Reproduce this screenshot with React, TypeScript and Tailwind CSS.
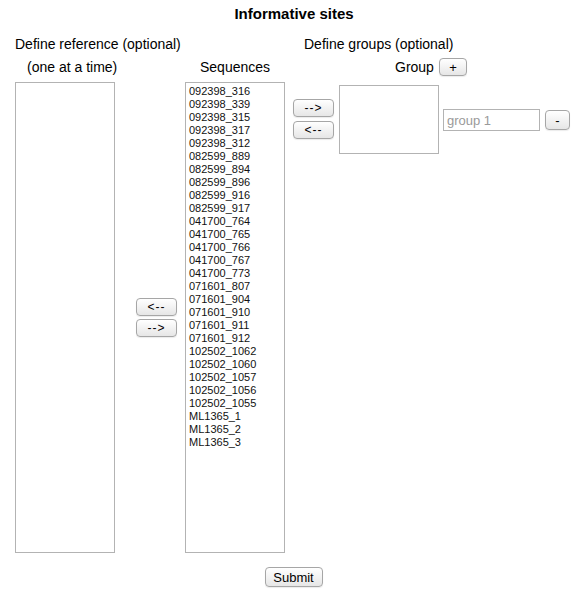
import React from "react";

const sequences = [
  "092398_316", "092398_339", "092398_315", "092398_317", "092398_312",
  "082599_889", "082599_894", "082599_896", "082599_916", "082599_917",
  "041700_764", "041700_765", "041700_766", "041700_767", "041700_773",
  "071601_807", "071601_904", "071601_910", "071601_911", "071601_912",
  "102502_1062", "102502_1060", "102502_1057", "102502_1056", "102502_1055",
  "ML1365_1", "ML1365_2", "ML1365_3",
];

const Btn: React.FC<{ label: string; className?: string }> = ({ label, className = "" }) => (
  <button
    className={`flex items-center justify-center rounded-[4px] border border-[#a6a6a6] bg-gradient-to-b from-white to-[#e6e6e6] text-[12px] leading-none text-black shadow-[0_1px_1px_rgba(0,0,0,0.08)] ${className}`}
  >
    {label}
  </button>
);

const App: React.FC = () => {
  return (
    <div className="w-[582px] h-[596px] bg-white text-black font-['Liberation_Sans',Arial,sans-serif]">
      <h1 className="pt-[5px] h-[36px] text-center text-[15px] leading-[18px] font-bold pl-[6px]">
        Informative sites
      </h1>

      {/* labels row */}
      <div className="flex h-[16px] text-[14px] leading-[16px]">
        <div className="w-[304px] pl-[15px]">Define reference (optional)</div>
        <div>Define groups (optional)</div>
      </div>

      <div className="flex items-center h-[30px] text-[14px]">
        <div className="w-[185px] pl-[27px]">(one at a time)</div>
        <div className="w-[210px] pl-[15px]">Sequences</div>
        <div className="flex items-center">
          <span className="mr-[5px]">Group</span>
          <Btn label="+" className="w-[28px] h-[18px] text-[13px]" />
        </div>
      </div>

      {/* main row */}
      <div className="flex h-[471px]">
        <div className="ml-[15px] w-[100px] h-full border border-[#b3b3b3]" />
        <div className="ml-[21px] w-[41px] flex flex-col justify-center gap-[3px]">
          <Btn label="<--" className="w-[41px] h-[18px] tracking-[1px]" />
          <Btn label="-->" className="w-[41px] h-[18px] tracking-[1px]" />
        </div>
        <div className="ml-[8px] w-[100px] h-full border border-[#b3b3b3] pl-[3px] pt-[2px] text-[11px] leading-[13px] text-[#111]">
          {sequences.map((s) => (
            <div key={s}>{s}</div>
          ))}
        </div>
        <div className="ml-[8px] flex items-start">
          <div className="mt-[17px] flex flex-col gap-[4px]">
            <Btn label="-->" className="w-[41px] h-[18px] tracking-[1px]" />
            <Btn label="<--" className="w-[41px] h-[18px] tracking-[1px]" />
          </div>
          <div className="ml-[5px] mt-[3px] w-[100px] h-[69px] border border-[#b3b3b3]" />
          <div className="ml-[4px] mt-[27px] flex items-center">
            <input
              placeholder="group 1"
              className="w-[97px] h-[22px] border border-[#b3b3b3] px-[3px] text-[13px] placeholder:text-[#9a9a9a] outline-none"
            />
            <Btn label="-" className="ml-[5px] w-[25px] h-[20px] text-[13px]" />
          </div>
        </div>
      </div>

      <div className="flex justify-center pt-[14px] pl-[5px]">
        <Btn label="Submit" className="w-[58px] h-[20px] text-[13px]" />
      </div>
    </div>
  );
};

export default App;
